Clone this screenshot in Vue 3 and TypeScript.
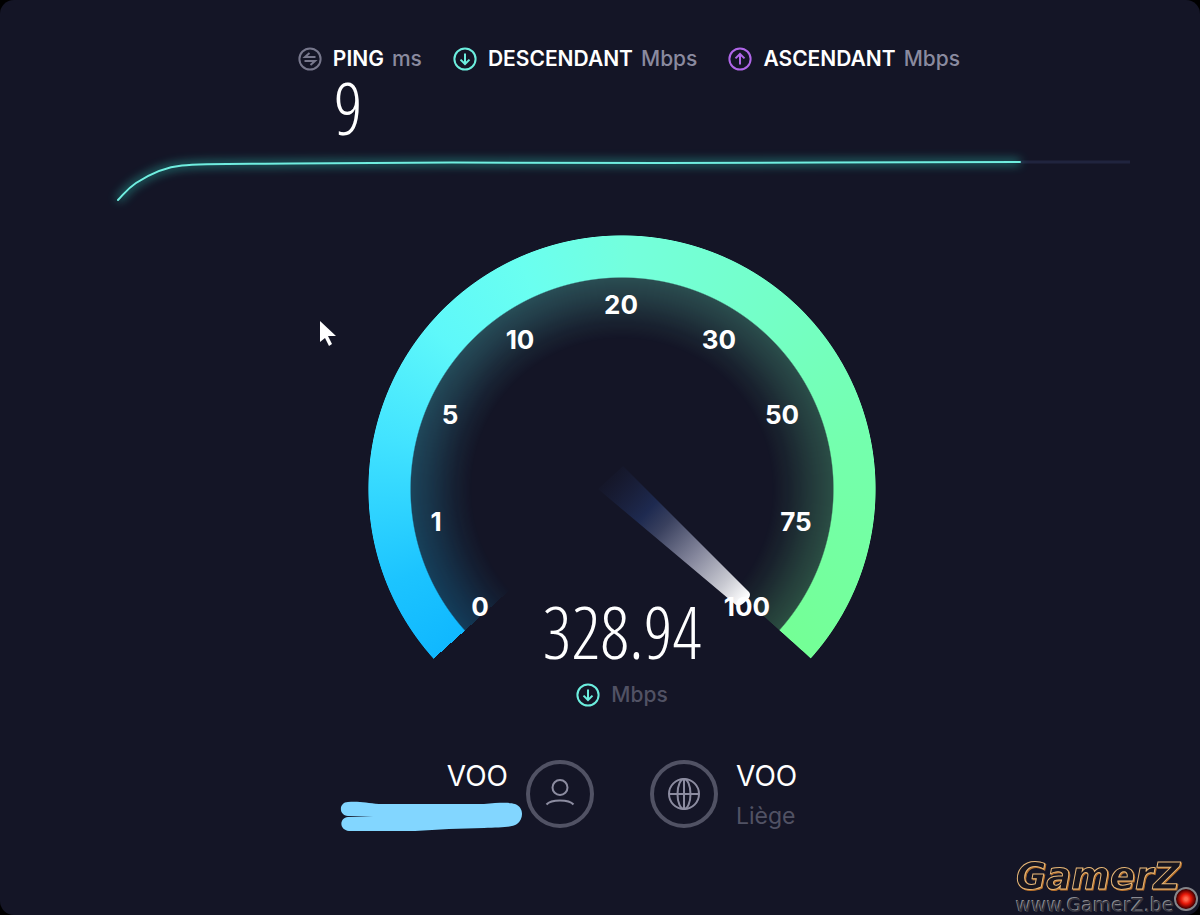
<script setup lang="ts">
interface Tick {
  label: string
  x: number
  y: number
}

const ping = 9
const speed = 328.94

const ticks: Tick[] = [
  { label: '0', x: 112, y: 381 },
  { label: '1', x: 68, y: 296 },
  { label: '5', x: 82, y: 189 },
  { label: '10', x: 152, y: 114 },
  { label: '20', x: 253, y: 79 },
  { label: '30', x: 351, y: 114 },
  { label: '50', x: 414, y: 189 },
  { label: '75', x: 428, y: 296 },
  { label: '100', x: 379, y: 381 },
]
</script>

<template>
  <main class="app">
    <header class="metrics">
      <section class="metric">
        <h2 class="metric-title">
          <svg class="icon muted" viewBox="0 0 24 24" aria-hidden="true">
            <circle cx="12" cy="12" r="10.6" />
            <path d="M11.500 6 7 10H17.500M6.500 14H17L12.500 18" />
          </svg>
          <span class="name">PING</span>
          <span class="unit">ms</span>
        </h2>
        <p class="digits ping-value">{{ ping }}</p>
      </section>
      <section class="metric">
        <h2 class="metric-title">
          <svg class="icon down" viewBox="0 0 24 24" aria-hidden="true">
            <circle cx="12" cy="12" r="10.6" />
            <path d="M12 6.500V17M7.500 12.600 12 17l4.500-4.400" />
          </svg>
          <span class="name">DESCENDANT</span>
          <span class="unit">Mbps</span>
        </h2>
      </section>
      <section class="metric">
        <h2 class="metric-title">
          <svg class="icon up" viewBox="0 0 24 24" aria-hidden="true">
            <circle cx="12" cy="12" r="10.6" />
            <path d="M12 17.500V7M7.500 11.400 12 7l4.500 4.400" />
          </svg>
          <span class="name">ASCENDANT</span>
          <span class="unit">Mbps</span>
        </h2>
      </section>
    </header>

    <svg class="graph" viewBox="1 0 1038 70" aria-hidden="true">
      <defs>
        <filter id="glow" filterUnits="userSpaceOnUse" x="-10" y="-20" width="1060" height="110">
          <feGaussianBlur stdDeviation="5" />
        </filter>
      </defs>
      <path class="track" d="M918 22H1028" />
      <path
        class="halo"
        filter="url(#glow)"
        d="M16 60C22 54 25 49 34 43C48 34 62 27 80 25.500C100 23.500 130 24 190 23.500L350 22.500L560 23L720 22.500L918 22"
      />
      <path
        class="line"
        d="M16 60C22 54 25 49 34 43C48 34 62 27 80 25.500C100 23.500 130 24 190 23.500L350 22.500L560 23L720 22.500L918 22"
      />
    </svg>

    <section class="gauge">
      <div class="ring"></div>
      <svg class="face" viewBox="0 0 508 424" role="img" aria-label="Débit">
        <defs>
          <linearGradient id="needle" gradientUnits="userSpaceOnUse" x1="238" y1="238" x2="376" y2="366">
            <stop offset="0" stop-color="#1c2444" stop-opacity="0" />
            <stop offset="0.3" stop-color="#1e2a50" />
            <stop offset="0.42" stop-color="#3a415f" />
            <stop offset="0.64" stop-color="#82849a" />
            <stop offset="0.86" stop-color="#c8c9d1" />
            <stop offset="1" stop-color="#ffffff" />
          </linearGradient>
        </defs>
        <path fill="url(#needle)" d="M230 254 255 231 381 357Q384 361 378 366Q372 372 368 370Z" />
        <text v-for="t in ticks" :key="t.label" class="tick" :x="t.x" :y="t.y">{{ t.label }}</text>
      </svg>
      <p class="digits speed-value">{{ speed }}</p>
    </section>

    <p class="speed-unit">
      <svg class="icon down" viewBox="0 0 24 24" aria-hidden="true">
        <circle cx="12" cy="12" r="10.6" />
        <path d="M12 6.500V17M7.500 12.600 12 17l4.500-4.400" />
      </svg>
      Mbps
    </p>

    <footer class="hosts">
      <div class="host client">
        <p class="host-name">VOO</p>
        <svg class="redaction" viewBox="0 0 184 32" aria-hidden="true">
          <path d="M9 2C20 1 28 3 40 4L145 4C158 3 170 2 176 4C185 7 185 19 178 24C172 28 160 27 145 28L110 29L76 31H10C0 30 0 18 9 17L34 17L9 16C-1 15 0 2 9 2Z" />
        </svg>
      </div>
      <div class="badges">
        <svg class="badge" viewBox="0 0 68 68" aria-hidden="true">
          <circle class="rim" cx="34" cy="34" r="32" />
          <circle cx="34" cy="27.500" r="7.500" />
          <path d="M20.500 44.500Q24 40.500 34 40.500T47.500 44.500" />
        </svg>
        <svg class="badge" viewBox="0 0 68 68" aria-hidden="true">
          <circle class="rim" cx="34" cy="34" r="32" />
          <circle cx="34" cy="34" r="15" />
          <ellipse cx="34" cy="34" rx="6.500" ry="15" />
          <path d="M19 34H49M34 19V49" />
        </svg>
      </div>
      <div class="host">
        <p class="host-name">VOO</p>
        <p class="host-city">Liège</p>
      </div>
    </footer>

    <svg class="cursor" viewBox="0 0 16 26" aria-hidden="true">
      <path d="M0 0V21L5 17L9 25L12 23L8 15H16Z" />
    </svg>

    <aside class="watermark">
      <span class="brand">GamerZ</span>
      <span class="site">www.GamerZ.be</span>
      <span class="lamp"></span>
    </aside>
  </main>
</template>

<style>
html {
  background: #000;
}
body {
  margin: 0;
}
</style>

<style scoped>
.app {
  position: relative;
  box-sizing: border-box;
  display: flex;
  flex-direction: column;
  align-items: center;
  min-height: 100vh;
  padding: 45px 59px 0 103px;
  overflow: hidden;
  border-radius: 14px;
  background: #141526;
  color: #fff;
  font-family: Inter, 'Open Sans', sans-serif;
}

p,
h2 {
  margin: 0;
  font-weight: 400;
}

.metrics {
  display: flex;
  align-items: flex-start;
  gap: 31px;
  height: 95px;
  padding-left: 14px;
}

.metric-title {
  display: flex;
  align-items: center;
  font-size: 21px;
  line-height: 28px;
}

.icon {
  width: 24px;
  height: 24px;
  margin-right: 11px;
  fill: none;
  stroke-width: 2;
}

.muted {
  stroke: #77778c;
}

.down {
  stroke: #6ceede;
}

.up {
  stroke: #b066e8;
}

.name {
  margin-right: 8px;
  font-weight: 600;
}

.unit {
  color: #8a8a9f;
  font-weight: 500;
}

.digits {
  font-family: 'Open Sans Condensed Light', 'Open Sans Condensed', 'Roboto Condensed', 'Liberation Sans Narrow', Roboto, sans-serif;
  font-weight: 100;
}

.ping-value {
  padding-left: 36px;
  font-size: 72px;
  line-height: 68px;
}

.graph {
  width: 100%;
  overflow: visible;
  fill: none;
}

.track {
  stroke: #20243e;
  stroke-width: 3;
}

.halo {
  stroke: #2fd0bd;
  stroke-width: 6;
  opacity: 0.5;
}

.line {
  stroke: #70eee0;
  stroke-width: 2;
  stroke-linecap: round;
}

.gauge {
  display: grid;
  width: 508px;
  margin-top: 25px;
}

.ring,
.face,
.speed-value {
  position: relative;
  grid-area: 1 / 1;
}

.ring {
  height: 424px;
  background: conic-gradient(
    from 228deg at 50% 254px,
    #10b8ff 0deg,
    #1cc4ff 20deg,
    #42e3ff 54deg,
    #5ef8fa 82deg,
    #6afff0 108deg,
    #74ffdc 134deg,
    #74ffc8 170deg,
    #74ffae 210deg,
    #74ff96 263.8deg,
    transparent 264deg
  );
  mask-image: radial-gradient(
    circle 254px at 50% 254px,
    transparent 59%,
    rgba(0, 0, 0, 0.06) 66%,
    rgba(0, 0, 0, 0.16) 75%,
    rgba(0, 0, 0, 0.24) 83%,
    #000 83.5%,
    #000 99.7%,
    transparent 100%
  );
}

.face {
  width: 100%;
}

.tick {
  fill: #fff;
  font-size: 26px;
  font-weight: 700;
  text-anchor: middle;
}

.speed-value {
  align-self: end;
  justify-self: center;
  font-size: 72px;
  line-height: 56px;
}

.speed-unit {
  display: flex;
  align-items: center;
  margin-top: 22px;
  color: #515264;
  font-size: 21px;
  font-weight: 500;
  line-height: 28px;
}

.hosts {
  display: grid;
  grid-template-columns: 1fr auto 1fr;
  column-gap: 18px;
  width: 100%;
  margin-top: 51px;
}

.badges {
  display: flex;
  gap: 56px;
}

.badge {
  width: 68px;
  height: 68px;
  fill: none;
  stroke: #8c8ca0;
  stroke-width: 2;
}

.rim {
  stroke: #515264;
  stroke-width: 4;
}

.host {
  position: relative;
}

.client {
  text-align: right;
}

.host-name {
  font-size: 28px;
  line-height: 32px;
}

.host-city {
  margin-top: 10px;
  color: #515264;
  font-size: 23px;
  line-height: 28px;
}

.redaction {
  position: absolute;
  top: 40px;
  right: -15px;
  width: 184px;
  fill: #82d6ff;
}

.cursor {
  position: absolute;
  top: 321px;
  left: 320px;
  width: 16px;
  fill: #fff;
}

.watermark {
  position: absolute;
  right: 2px;
  bottom: 0;
  display: flex;
  flex-direction: column;
  width: 182px;
  font-family: 'DejaVu Sans', sans-serif;
}

.brand {
  color: #17151f;
  font-size: 37px;
  font-style: italic;
  font-weight: 700;
  line-height: 36px;
  -webkit-text-stroke: 1px #e8b878;
  filter: drop-shadow(1px 1px 0 #b8702a);
}

.site {
  color: #34343e;
  font-size: 19px;
  line-height: 20px;
  text-shadow: -1px -1px 0 #8a8a90;
}

.lamp {
  position: absolute;
  right: 0;
  bottom: 4px;
  box-sizing: border-box;
  width: 24px;
  height: 24px;
  border: 2px solid #85858a;
  border-radius: 50%;
  background: radial-gradient(circle, #ff6a50 0 10%, #e81808 35%, #500 65%, #100 80%);
}
</style>
